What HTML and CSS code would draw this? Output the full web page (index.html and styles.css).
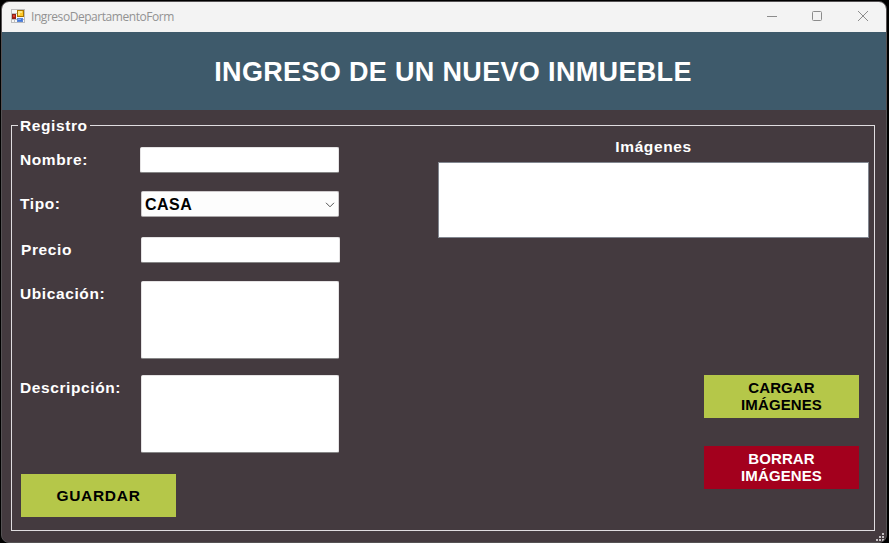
FILE: index.html
```html
<!DOCTYPE html>
<html lang="es">
<head>
<meta charset="utf-8">
<title>IngresoDepartamentoForm</title>
<link rel="stylesheet" href="styles.css">
</head>
<body>
<div class="window">
  <div class="titlebar">
    <svg class="app-icon" width="14" height="14" viewBox="0 0 14 14" shape-rendering="crispEdges">
      <path fill="#f7f7f7" stroke="#bdbdbd" d="M.5.5h13v13H.5zM.5 4.500h5M.5 10.500h13M3.500 10v3"/>
      <path fill="#b5170d" stroke="#8e211a" d="M1.500 5.500h3v4h-3z"/>
      <path fill="#e0402c" d="M2 6h2v2H2z"/>
      <path fill="#ffc928" stroke="#a97500" d="M6.500 1.500h6v6h-6z"/>
      <path fill="#ffe680" d="M7 2h4v2H9v2H7z"/>
      <path fill="#4178dd" stroke="#5c86d4" d="M6.500 9.500h5v3h-5z"/>
      <path fill="#7eabfa" d="M7 10h3v1H7z"/>
    </svg>
    <span class="caption">IngresoDepartamentoForm</span>
    <svg class="controls" width="102" height="12" viewBox="0 0 102 12" fill="none" stroke="#8c8c8c">
      <path d="M0 6.500h10"/>
      <rect x="45.500" y="1.500" width="9" height="9" rx="1"/>
      <path d="M91 1l10 10M101 1L91 11"/>
    </svg>
  </div>
  <header class="banner"><h1>INGRESO DE UN NUEVO INMUEBLE</h1></header>
  <main class="content">
    <fieldset class="group">
      <legend>Registro</legend>
      <div class="columns">
        <form class="form">
          <div class="row row-nombre"><label>Nombre:</label><div class="field"></div></div>
          <div class="row row-tipo"><label>Tipo:</label>
            <div class="field combo"><span>CASA</span>
              <svg width="10" height="6" viewBox="0 0 10 6" fill="none" stroke="#555"><path d="M1 .8l4 4 4-4"/></svg>
            </div>
          </div>
          <div class="row row-precio"><label>Precio</label><div class="field"></div></div>
          <div class="row row-ubicacion"><label>Ubicación:</label><div class="field area"></div></div>
          <div class="row row-descripcion"><label>Descripción:</label><div class="field area"></div></div>
          <button type="button" class="btn save">GUARDAR</button>
        </form>
        <section class="images">
          <h2>Imágenes</h2>
          <div class="list"></div>
          <button type="button" class="btn load">CARGAR<br>IMÁGENES</button>
          <button type="button" class="btn clear">BORRAR<br>IMÁGENES</button>
        </section>
      </div>
    </fieldset>
  </main>
  <svg class="grip" width="8" height="8" viewBox="0 0 8 8" fill="#c4c0c2"><path d="M6 0h2v2H6zM3 3h2v2H3zM6 3h2v2H6zM0 6h2v2H0zM3 6h2v2H3zM6 6h2v2H6z"/></svg>
</div>
</body>
</html>
```
FILE: styles.css
```css
* { box-sizing: border-box; }
body {
  margin: 0;
  height: 543px;
  padding: 1px 2px 0 1px;
  background: #000;
  overflow: hidden;
  font: bold 15px/17px "Liberation Sans", Arial, sans-serif;
  color: #fff;
}
.window {
  position: relative;
  height: 542px;
  border: 1px solid #555254;
  border-radius: 8px;
  background: #443a3f;
  overflow: hidden;
}
.titlebar {
  display: flex;
  align-items: center;
  height: 30px;
  padding: 0 17px 0 9px;
  background: #f3f3f3;
}
.app-icon { margin-top: -2px; }
.caption {
  margin-left: 6px;
  font: 12px/16px "Open Sans", "Noto Sans", sans-serif;
  letter-spacing: -0.45px;
  color: #929292;
}
.controls { margin-left: auto; margin-top: -2px; }
.banner {
  display: flex;
  align-items: center;
  justify-content: center;
  height: 78px;
  padding-left: 18px;
  background: #3e5a6b;
}
h1 {
  margin: 2px 0 0;
  font-size: 27px;
  line-height: 32px;
  letter-spacing: 0.34px;
  white-space: nowrap;
}
.content { padding: 7px 11px 0 9px; }
.group {
  height: 414px;
  margin: 0;
  padding: 0;
  border: 1px solid #e0dde0;
  min-width: 0;
}
legend {
  height: 17px;
  margin-left: 6px;
  padding: 0 2px;
}
legend, label, h2 { font-size: 15.5px; letter-spacing: 0.6px; }
.columns { display: flex; }
.form { width: 426px; padding: 13px 0 0 8px; }
.row { display: flex; align-items: flex-start; }
.row label { width: 121px; padding-top: 4px; }
.field {
  width: 198px;
  height: 26px;
  background: #fff;
  border: 1px solid #e5e3e4;
  border-bottom-color: #868686;
  border-radius: 2px;
}
.area { height: 78px; }
.row-nombre label { width: 120px; }
.row-nombre .field { width: 199px; }
.row-tipo { margin-top: 18px; }
.combo {
  display: flex;
  align-items: center;
  justify-content: space-between;
  padding: 0 3px 0 3px;
  background: #fdfdfd;
  border-color: #cfcbcd;
  border-bottom-color: #aaa6a8;
  color: #000;
  font-size: 16px;
  letter-spacing: 0.5px;
}
.combo svg { margin-top: 2px; }
.row-precio { margin-top: 20px; }
.row-precio label { padding-left: 1px; }
.row-precio .field { width: 199px; }
.row-ubicacion { margin-top: 18px; }
.row-descripcion { margin-top: 16px; }
.btn {
  display: block;
  width: 155px;
  height: 43px;
  padding: 0;
  border: 0;
  font: inherit;
  color: #000;
  background: #b5c749;
}
.save { margin: 21px 0 0 1px; font-size: 15.5px; letter-spacing: 0.7px; }
.images { width: 431px; flex: none; padding-top: 4px; }
.images h2 {
  margin: 0 0 7px;
  line-height: 17px;
  text-align: center;
}
.list { height: 76px; background: #fff; border: 1px solid #828790; }
.load, .clear { margin-left: 266px; padding-bottom: 2px; letter-spacing: 0.1px; }
.load { margin-top: 137px; }
.clear { margin-top: 28px; color: #fff; background: #a3001d; }
.grip { position: absolute; right: 2px; bottom: 1px; }
```
